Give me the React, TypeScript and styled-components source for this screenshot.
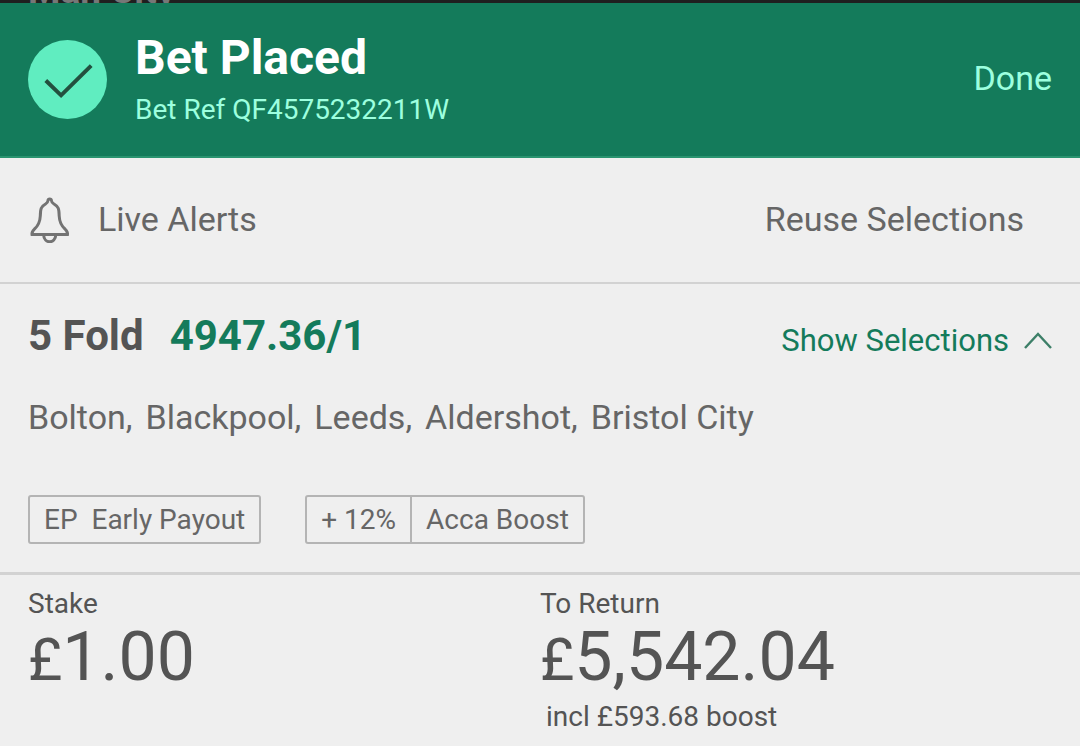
import React from "react";
import styled, { createGlobalStyle } from "styled-components";

const Global = createGlobalStyle`
  *, *::before, *::after { box-sizing: border-box; }
  body { margin: 0; background: #efefef; font-family: Roboto, "Liberation Sans", sans-serif; color: #545454; }
  button { font: inherit; color: inherit; background: none; border: 0; padding: 0; cursor: pointer; }
  h1, h2, p, dl, dd, dt, ul { margin: 0; padding: 0; }
`;

const Page = styled.main`
  width: 100%;
  background: #efefef;
`;

const Behind = styled.div`
  position: relative;
  height: 3px;
  background: #1f1f1f;
  overflow: hidden;
`;

const BehindText = styled.span`
  position: absolute;
  left: 28px;
  bottom: -8px;
  font-size: 37px;
  line-height: 40px;
  font-weight: 700;
  color: #777777;
`;

const Header = styled.header`
  display: flex;
  align-items: center;
  min-height: 155px;
  padding: 0 28px;
  gap: 28px;
  background: #147b5b;
  border-bottom: 2px solid #2a9470;
`;

const Tick = styled.svg`
  flex: none;
  width: 79px;
  height: 79px;
`;

const HeaderText = styled.div`
  flex: 1;
`;

const Title = styled.h1`
  font-size: 48px;
  line-height: 56px;
  font-weight: 700;
  color: #ffffff;
`;

const Reference = styled.p`
  font-size: 28px;
  line-height: 32px;
  margin: 8px 0 4px;
  color: #9dffdf;
`;

const DoneButton = styled.button`
  && { padding-bottom: 4px; font-size: 34px; line-height: 40px; color: #9dffdf; }
`;

const Actions = styled.nav`
  display: flex;
  align-items: center;
  justify-content: space-between;
  min-height: 126px;
  padding: 0 56px 2px 28px;
  border-bottom: 2px solid #d2d2d2;
`;

const ActionButton = styled.button`
  && {
    display: flex;
    align-items: center;
    gap: 28px;
    font-size: 34px;
    line-height: 40px;
    color: #666666;
  }
`;

const Bell = styled.svg`
  width: 42px;
  height: 48px;
`;

const Bet = styled.section`
  padding: 28px;
  border-bottom: 3px solid #d2d2d2;
`;

const BetHead = styled.div`
  display: flex;
  align-items: center;
  justify-content: space-between;
`;

const BetTitle = styled.h2`
  display: flex;
  gap: 26px;
  font-size: 42px;
  line-height: 48px;
  font-weight: 700;
`;

const Odds = styled.span`
  color: #147b5b;
`;

const ShowButton = styled.button`
  && {
    display: flex;
    align-items: center;
    gap: 14px;
    padding-top: 10px;
    font-size: 31px;
    line-height: 38px;
    color: #147b5b;
  }
`;

const Chevron = styled.svg`
  width: 29px;
  height: 18px;
`;

const Selections = styled.ul`
  display: flex;
  flex-wrap: wrap;
  gap: 13px;
  margin-top: 37px;
  font-size: 34px;
  line-height: 40px;
  color: #666666;
  list-style: none;
`;

const Badges = styled.div`
  display: flex;
  gap: 44px;
  margin-top: 58px;
`;

const Badge = styled.div`
  display: flex;
  border: 2px solid #b4b4b4;
  border-radius: 3px;
  font-size: 28px;
  line-height: 45px;
  color: #666666;
`;

const BadgePart = styled.span<{ $divided?: boolean }>`
  padding: 0 14px;
  white-space: pre;
  border-left: ${(p) => (p.$divided ? "2px solid #b4b4b4" : "0")};
`;

const Totals = styled.dl`
  display: grid;
  grid-template-columns: 1fr 1fr;
  padding: 12px 0;
`;

const Total = styled.div<{ $first?: boolean }>`
  padding-left: ${(p) => (p.$first ? "28px" : "0")};
`;

const Label = styled.dt`
  font-size: 28px;
  line-height: 34px;
`;

const Amount = styled.dd`
  font-size: 68px;
  line-height: 72px;
`;

const Pound = styled.span`
  font-size: 59px;
  line-height: 59px;
`;

const Note = styled.dd`
  padding-left: 6px;
  margin-top: 8px;
  font-size: 28px;
  line-height: 32px;
`;

const teams = ["Bolton,", "Blackpool,", "Leeds,", "Aldershot,", "Bristol City"];

export default function App() {
  return (
    <Page>
      <Global />
      <Behind>
        <BehindText>Man City</BehindText>
      </Behind>
      <Header>
        <Tick viewBox="0 0 80 80" aria-hidden="true">
          <circle cx="40" cy="40" r="40" fill="#60edc0" />
          <path d="M18 41 L33.500 56 L64 26" fill="none" stroke="#23503f" strokeWidth="4" />
        </Tick>
        <HeaderText>
          <Title>Bet Placed</Title>
          <Reference>Bet Ref QF4575232211W</Reference>
        </HeaderText>
        <DoneButton type="button">Done</DoneButton>
      </Header>
      <Actions>
        <ActionButton type="button">
          <Bell viewBox="0 0 42 48" fill="none" stroke="#737373" strokeWidth="3" aria-hidden="true">
            <path d="M4 39.500 C3.500 37 5 35.500 6.500 34 C10.500 30.500 12 27 12.300 21 C12.400 14 13 11.500 17.500 9 C19.500 7.800 19.900 7 20 5.500 C20.200 3.500 23.200 3.500 23.400 5.500 C23.500 7 24 7.800 26 9 C30.500 11.500 31.100 14 31.200 21 C31.500 27 33 30.500 37 34 C38.500 35.500 40 37 39.500 39.500 Z" />
            <path d="M15.700 40 C15.700 49 27.700 49 27.700 40" />
          </Bell>
          Live Alerts
        </ActionButton>
        <ActionButton type="button">Reuse Selections</ActionButton>
      </Actions>
      <Bet>
        <BetHead>
          <BetTitle>
            5 Fold <Odds>4947.36/1</Odds>
          </BetTitle>
          <ShowButton type="button">
            Show Selections
            <Chevron viewBox="0 0 29 18" fill="none" stroke="#3d7f68" strokeWidth="2.400" aria-hidden="true">
              <path d="M2 16 L15 2 L28 16" />
            </Chevron>
          </ShowButton>
        </BetHead>
        <Selections>
          {teams.map((team) => (
            <li key={team}>{team}</li>
          ))}
        </Selections>
        <Badges>
          <Badge>
            <BadgePart>EP  Early Payout</BadgePart>
          </Badge>
          <Badge>
            <BadgePart>+ 12%</BadgePart>
            <BadgePart $divided>Acca Boost</BadgePart>
          </Badge>
        </Badges>
      </Bet>
      <Totals>
        <Total $first>
          <Label>Stake</Label>
          <Amount><Pound>£</Pound>1.00</Amount>
        </Total>
        <Total>
          <Label>To Return</Label>
          <Amount><Pound>£</Pound>5,542.04</Amount>
          <Note>incl £593.68 boost</Note>
        </Total>
      </Totals>
    </Page>
  );
}
